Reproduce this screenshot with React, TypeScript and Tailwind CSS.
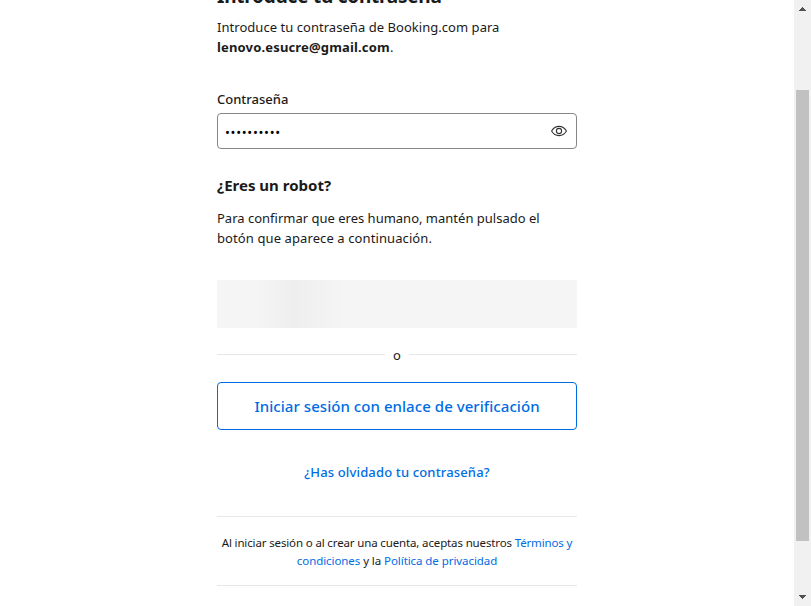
import React from "react";

function EyeIcon() {
  return (
    <svg width="16" height="16" viewBox="0 0 16 16" fill="none" stroke="#333" strokeWidth="1.1">
      <path d="M0.6 8C2.4 4.900 5 3.400 8 3.400S13.600 4.900 15.400 8C13.600 11.100 11 12.600 8 12.600S2.400 11.100 0.600 8Z" />
      <circle cx="8" cy="8" r="2.600" />
    </svg>
  );
}

function Scrollbar() {
  return (
    <div className="flex h-full w-[17px] shrink-0 flex-col items-center justify-between bg-[#f1f1f1]">
      <svg width="17" height="17" viewBox="0 0 17 17" fill="#505050" shapeRendering="crispEdges">
        <path d="M8 7h1v1h1v1h1v1h1v1H5v-1h1V9h1V8h1z" />
      </svg>
      <div className="mt-[73px] h-[451px] w-[13px] bg-[#c1c1c1]" />
      <div className="flex-1" />
      <svg width="17" height="17" viewBox="0 0 17 17" fill="#505050" shapeRendering="crispEdges">
        <path d="M5 6h7v1h-1v1h-1v1H9v1H8V9H7V8H6V7H5z" />
      </svg>
    </div>
  );
}

export default function App() {
  return (
    <div className="flex h-[606px] w-[811px] overflow-hidden bg-white font-['Noto_Sans','Open_Sans',sans-serif] text-[#1a1a1a]">
      <main className="flex flex-1 justify-center overflow-hidden">
        <div className="w-[360px] whitespace-nowrap text-[13px] leading-5">
          <h1 className="-mt-[18px] h-7 text-[19px] font-bold leading-7 tracking-[-0.25px]">Introduce tu contraseña</h1>
          <p className="mt-[7px]">
            <span className="block tracking-[0.04px]">Introduce tu contraseña de Booking.com para</span>
            <span className="block tracking-[0.16px]"><b className="font-bold">lenovo.esucre@gmail.com</b>.</span>
          </p>
          <label className="mt-8 block font-medium">Contraseña</label>
          <div className="mt-1 flex h-9 items-center justify-between rounded-[4px] border border-[#868686] pl-[7px] pr-[9px]">
            <span className="pt-[2px] text-[13px] tracking-[0.700px] text-black">••••••••••</span>
            <EyeIcon />
          </div>
          <h2 className="mt-6 text-[15px] font-bold leading-6">¿Eres un robot?</h2>
          <p className="mt-[11px]">
            <span className="block">Para confirmar que eres humano, mantén pulsado el</span>
            <span className="block tracking-[0.1px]">botón que aparece a continuación.</span>
          </p>
          <div className="mt-8 h-12 bg-[#f5f5f5] bg-[linear-gradient(90deg,#f5f5f5_40px,#eeeeee_77px,#f5f5f5_128px)]" />
          <div className="mt-[17px] flex h-5 items-center">
            <div className="mb-px h-px flex-1 bg-[#e7e7e7]" />
            <span className="w-6 text-center">o</span>
            <div className="mb-px h-px flex-1 bg-[#e7e7e7]" />
          </div>
          <button className="mt-[17px] block h-12 w-full rounded-[4px] border border-[#006ce4] text-[15px] font-medium tracking-[0.05px] text-[#006ce4]">
            Iniciar sesión con enlace de verificación
          </button>
          <a className="mt-8 block text-center font-medium tracking-[0.15px] text-[#006ce4]">¿Has olvidado tu contraseña?</a>
          <div className="mt-[34px] h-[70px] border-y border-[#e7e7e7] pt-[17px] text-center text-[11.500px] leading-[18px]">
            <div className="tracking-[-0.140px]">Al iniciar sesión o al crear una cuenta, aceptas nuestros <a className="text-[#006ce4]">Términos y</a></div>
            <div className="tracking-[-0.070px]"><a className="text-[#006ce4]">condiciones</a> y la <a className="text-[#006ce4]">Política de privacidad</a></div>
          </div>
        </div>
      </main>
      <Scrollbar />
    </div>
  );
}
